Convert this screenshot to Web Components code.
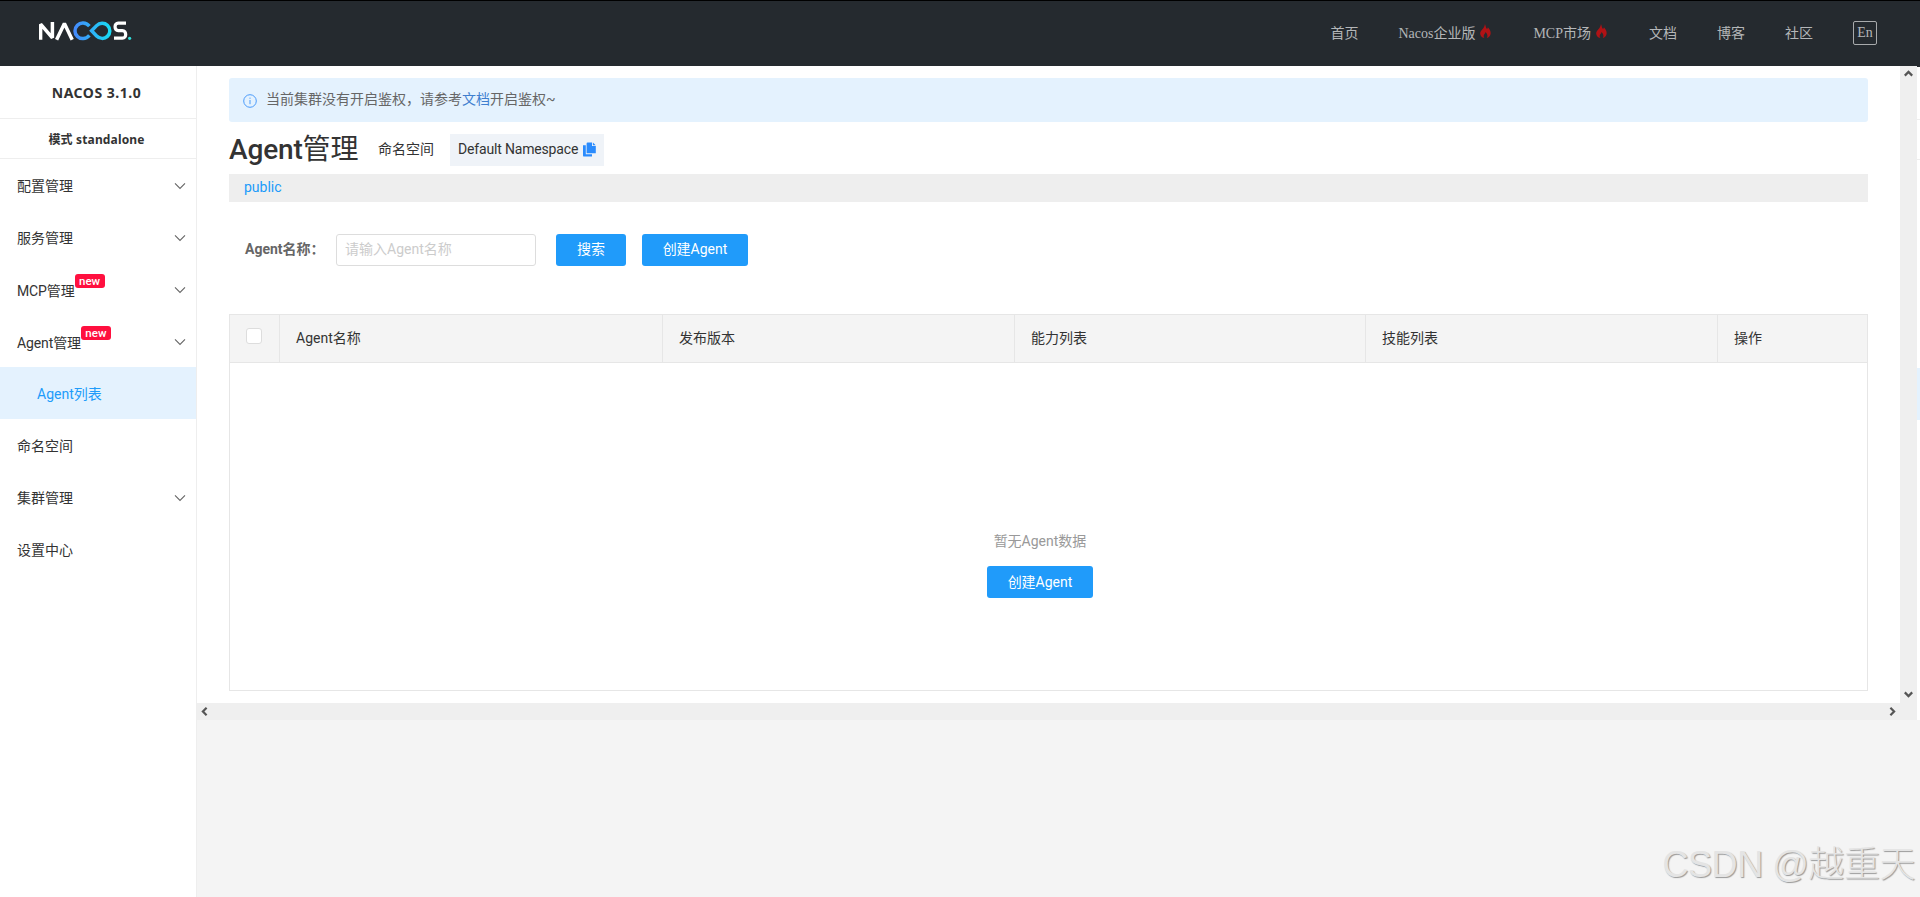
<!DOCTYPE html>
<html lang="zh-CN">
<head>
<meta charset="utf-8">
<title>Nacos</title>
<style>
    body{
        margin: 0;
        background: #f4f4f4;
        color: #333;
        font: 14px/20px Roboto, "Noto Sans CJK SC", sans-serif;
        overflow: hidden;
    }
</style>
</head>
<body>
<nacos-app></nacos-app>
<script>
class NacosLogo extends HTMLElement{
    constructor(){
        super()
        this.attachShadow({mode: 'open'})
        this.shadowRoot.innerHTML = `
            <style>
                :host{
                    display: block;
                    width: 93px;
                    height: 20px;
                }
                svg{
                    display: block;
                }
            </style>
            <svg width="93" height="20" viewBox="0 0 93 20" fill="none" stroke-width="3.5">
                <defs>
                    <linearGradient id="left" x1="34" y1="0" x2="72" y2="0" gradientUnits="userSpaceOnUse">
                        <stop offset="0" stop-color="#4686fb"/>
                        <stop offset="1" stop-color="#17dcf3"/>
                    </linearGradient>
                </defs>
                <path d="M1.6 18.8V3.2L13.4 16.8V1" stroke="#fff" stroke-linejoin="bevel"/>
                <path d="M17.6 18.8L25.4 2.6L33.2 18.8" stroke="#fff" stroke-linejoin="bevel"/>
                <path d="M50.4 5.2C46.8 1 41.4 1.2 38.4 4.2C35.2 7.4 35.2 12.4 38.4 15.4C41.4 18.4 46.8 18.6 50.4 14.4" stroke="url(#left)"/>
                <path d="M52.6 9.8L57.6 4.6C60.6 1.6 65.4 1.4 68.4 4.2C71.6 7.4 71.6 12.4 68.4 15.4C65.4 18.2 60.6 18 57.6 15Z" stroke="url(#left)"/>
                <path d="M87 2.1H79.2C75 2.1 75 9.6 79.2 9.6H83.4C87.8 9.6 87.8 17.2 83.4 17.2H75" stroke="#fff" stroke-width="3.2"/>
                <circle cx="90.6" cy="17.3" r="1.6" fill="#2fe0dd"/>
            </svg>
        `
    }
}

customElements.define('nacos-logo', NacosLogo)

class NavLink extends HTMLElement{
    constructor(){
        super()
        this.attachShadow({mode: 'open'})
        this.shadowRoot.innerHTML = `
            <style>
                :host{
                    display: flex;
                    white-space: nowrap;
                }
                svg{
                    display: none;
                    margin: 0 2px 0 5px;
                }
                :host([hot]) svg{
                    display: block;
                }
            </style>
            <slot></slot>
            <svg width="11" height="14" viewBox="0 0 12 17" preserveAspectRatio="none">
                <path fill="#b01215" d="M5.4 0C6.4 2.4 6 4 7.6 6C8.3 5.4 8.6 4.6 8.6 3.8C10.4 6 12 8.6 11.6 11.8C11.3 14.4 9.6 16.2 7.4 17C8.8 14.6 8.2 12.4 6 9.8C5.8 12 4 12.8 4 14.6C4 15.6 4.3 16.4 4.8 17C2 16.4 .2 14.2 .2 11.4C.2 7.4 5 5.6 5.4 0Z"/>
            </svg>
        `
    }
}

customElements.define('nav-link', NavLink)

class NacosHeader extends HTMLElement{
    constructor(){
        super()
        this.attachShadow({mode: 'open'})
        this.shadowRoot.innerHTML = `
            <style>
                :host{
                    display: flex;
                    justify-content: space-between;
                    box-sizing: border-box;
                    height: 66px;
                    padding: 0 43px 0 39px;
                    border-top: 1px solid #000;
                    background: #252a2f;
                    color: #b4b6b8;
                    font: 14px/20px "Liberation Serif", "Noto Sans CJK SC", serif;
                }
                nacos-logo{
                    margin-top: 20px;
                }
                nav{
                    display: flex;
                    align-items: flex-start;
                    padding-top: 23px;
                    gap: 40px;
                }
                .lang{
                    box-sizing: border-box;
                    width: 24px;
                    height: 24px;
                    border: 1px solid #a8aaac;
                    border-radius: 2px;
                    line-height: 21px;
                    text-align: center;
                    margin-top: -3px;
                }
            </style>
            <nacos-logo></nacos-logo>
            <nav>
                <nav-link>首页</nav-link>
                <nav-link hot>Nacos企业版</nav-link>
                <nav-link hot>MCP市场</nav-link>
                <nav-link>文档</nav-link>
                <nav-link>博客</nav-link>
                <nav-link>社区</nav-link>
                <span class="lang">En</span>
            </nav>
        `
    }
}

customElements.define('nacos-header', NacosHeader)

class MenuItem extends HTMLElement{
    constructor(){
        super()
        this.attachShadow({mode: 'open'})
        this.shadowRoot.innerHTML = `
            <style>
                :host{
                    display: flex;
                    align-items: center;
                    box-sizing: border-box;
                    height: 52px;
                    padding: 2px 10px 0 17px;
                }
                :host([active]){
                    padding-left: 37px;
                    background: #e4f2fe;
                    color: #209bfa;
                }
                :host([fresh]){
                    padding-top: 4px;
                    letter-spacing: -.12px;
                }
                .badge{
                    display: none;
                    align-self: flex-start;
                    box-sizing: border-box;
                    width: 30px;
                    height: 14px;
                    margin-top: 7px;
                    border-radius: 3px;
                    background: #ff103f;
                    color: #fff;
                    font-size: 11.5px;
                    font-weight: 500;
                    letter-spacing: 0;
                    line-height: 14px;
                    text-align: center;
                }
                :host([fresh]) .badge{
                    display: block;
                }
                svg{
                    display: none;
                    margin-left: auto;
                }
                :host([arrow]) svg{
                    display: block;
                }
                :host([fresh]) svg{
                    margin-top: -2px;
                }
            </style>
            <slot></slot>
            <span class="badge"></span>
            <svg width="12" height="8" viewBox="0 0 12 8"><path d="M1 1.4L6 6.4L11 1.4" fill="none" stroke="#666" stroke-width="1.1"/></svg>
        `
    }
    connectedCallback(){
        if(this.hasAttribute('fresh')){
            this.shadowRoot.querySelector('.badge').textContent = 'new'
        }
    }
}

customElements.define('menu-item', MenuItem)

class NacosSidebar extends HTMLElement{
    constructor(){
        super()
        this.attachShadow({mode: 'open'})
        this.shadowRoot.innerHTML = `
            <style>
                :host{
                    display: block;
                    box-sizing: border-box;
                    width: 197px;
                    border-right: 1px solid #eee;
                    background: #fff;
                }
                .title, .mode{
                    padding-right: 3px;
                    border-bottom: 1px solid #eee;
                    text-align: center;
                    font-family: "Noto Sans", "Noto Sans CJK SC", sans-serif;
                    font-weight: bold;
                }
                .title{
                    height: 52px;
                    line-height: 54px;
                    font-size: 14px;
                    letter-spacing: .5px;
                }
                .mode{
                    height: 39px;
                    line-height: 41px;
                    font-size: 12px;
                    letter-spacing: .15px;
                }
            </style>
            <div class="title">NACOS 3.1.0</div>
            <div class="mode">模式 standalone</div>
            <menu-item arrow>配置管理</menu-item>
            <menu-item arrow>服务管理</menu-item>
            <menu-item arrow fresh>MCP管理</menu-item>
            <menu-item arrow fresh>Agent管理</menu-item>
            <menu-item active>Agent列表</menu-item>
            <menu-item>命名空间</menu-item>
            <menu-item arrow>集群管理</menu-item>
            <menu-item>设置中心</menu-item>
        `
    }
}

customElements.define('nacos-sidebar', NacosSidebar)

class NacosButton extends HTMLElement{
    constructor(){
        super()
        this.attachShadow({mode: 'open'})
        this.shadowRoot.innerHTML = `
            <style>
                :host{
                    display: inline-flex;
                    justify-content: center;
                    box-sizing: border-box;
                    height: 32px;
                    width: 106px;
                    border-radius: 3px;
                    background: #209bfa;
                    color: #fff;
                    line-height: 31px;
                }
                :host([small]){
                    width: 70px;
                }
            </style>
            <slot></slot>
        `
    }
}

customElements.define('nacos-button', NacosButton)

class AuthNotice extends HTMLElement{
    constructor(){
        super()
        this.attachShadow({mode: 'open'})
        this.shadowRoot.innerHTML = `
            <style>
                :host{
                    display: flex;
                    box-sizing: border-box;
                    height: 44px;
                    padding: 11px 14px;
                    border-radius: 3px;
                    background: #e4f2fe;
                    color: #666;
                }
                svg{
                    margin: 5px 9px 0 0;
                }
                a{
                    color: #3f7fcf;
                }
            </style>
            <svg width="14" height="14" viewBox="0 0 14 14" fill="none" stroke="#4a9bfa"><circle cx="7" cy="7" r="6.3"/><path d="M7 3.6V4.8M7 6V10.2"/></svg>
            <span>当前集群没有开启鉴权，请参考<a>文档</a>开启鉴权~</span>
        `
    }
}

customElements.define('auth-notice', AuthNotice)

class PageTitle extends HTMLElement{
    constructor(){
        super()
        this.attachShadow({mode: 'open'})
        this.shadowRoot.innerHTML = `
            <style>
                :host{
                    display: flex;
                    align-items: center;
                    height: 32px;
                    margin-top: 12px;
                    white-space: nowrap;
                }
                h1{
                    width: 149px;
                    margin: 0;
                    font-size: 28px;
                    line-height: 32px;
                    font-weight: 500;
                    letter-spacing: -.15px;
                }
                h1 span{
                    font-weight: 400;
                }
                .label{
                    width: 72px;
                    padding-bottom: 2px;
                }
                .space{
                    display: flex;
                    align-items: center;
                    box-sizing: border-box;
                    width: 154px;
                    height: 32px;
                    padding: 0 0 2px 8px;
                    background: #eff3f8;
                    letter-spacing: -.17px;
                }
                svg{
                    margin: 1px 0 0 5px;
                }
            </style>
            <h1>Agent<span>管理</span></h1>
            <span class="label">命名空间</span>
            <div class="space">
                Default Namespace
                <svg width="13" height="15" viewBox="0 0 13 15" fill="#2a8bfd"><path d="M0 3.2H2.8V12.2H9V14.6H1.2Q0 14.6 0 13.4Z"/><path d="M4.6 .4H9V4H12.8V11.2H3.6V1.4Q3.6 .4 4.6 .4Z"/><path d="M9.9 .4L12.7 3.2H9.9Z"/></svg>
            </div>
        `
    }
}

customElements.define('page-title', PageTitle)

class SearchForm extends HTMLElement{
    constructor(){
        super()
        this.attachShadow({mode: 'open'})
        this.shadowRoot.innerHTML = `
            <style>
                :host{
                    display: flex;
                    align-items: center;
                    height: 32px;
                    margin: 32px 0 48px;
                    padding-left: 16px;
                }
                label{
                    width: 91px;
                    padding-bottom: 2px;
                    color: #666;
                    font-weight: 700;
                }
                input{
                    box-sizing: border-box;
                    width: 200px;
                    height: 32px;
                    margin: 0 20px 0 0;
                    padding: 0 8px 2px;
                    border: 1px solid #ddd;
                    border-radius: 3px;
                    font: inherit;
                }
                input::placeholder{
                    color: #ccc;
                }
                nacos-button + nacos-button{
                    margin-left: 16px;
                }
            </style>
            <label>Agent名称：</label>
            <input placeholder="请输入Agent名称">
            <nacos-button small>搜索</nacos-button>
            <nacos-button>创建Agent</nacos-button>
        `
    }
}

customElements.define('search-form', SearchForm)

class AgentTable extends HTMLElement{
    constructor(){
        super()
        this.attachShadow({mode: 'open'})
        this.shadowRoot.innerHTML = `
            <style>
                :host{
                    display: block;
                    box-sizing: border-box;
                    height: 377px;
                    border: 1px solid #e6e6e6;
                }
                .head{
                    display: grid;
                    grid-template-columns: 50px 383px 352px 351px 352px 1fr;
                    height: 47px;
                    border-bottom: 1px solid #e6e6e6;
                    background: #f4f4f4;
                    line-height: 47px;
                }
                .head > *{
                    box-sizing: border-box;
                    padding-left: 16px;
                    border-right: 1px solid #e6e6e6;
                }
                .head > :last-child{
                    border-right: 0;
                }
                .check{
                    padding-top: 13px;
                }
                .check i{
                    display: block;
                    box-sizing: border-box;
                    width: 16px;
                    height: 16px;
                    border: 1px solid #ddd;
                    border-radius: 3px;
                    background: #fff;
                }
                .empty{
                    display: flex;
                    flex-direction: column;
                    align-items: center;
                    padding: 168px 17px 0 0;
                    gap: 15px;
                    color: #999;
                }
                .empty nacos-button{
                    line-height: 32px;
                }
            </style>
            <div class="head">
                <span class="check"><i></i></span>
                <span>Agent名称</span>
                <span>发布版本</span>
                <span>能力列表</span>
                <span>技能列表</span>
                <span>操作</span>
            </div>
            <div class="empty">
                <span>暂无Agent数据</span>
                <nacos-button>创建Agent</nacos-button>
            </div>
        `
    }
}

customElements.define('agent-table', AgentTable)

class ScrollPane extends HTMLElement{
    constructor(){
        super()
        this.attachShadow({mode: 'open'})
        this.shadowRoot.innerHTML = `
            <style>
                :host{
                    display: grid;
                    grid-template-columns: 1703px 17px;
                    grid-template-rows: 637px 17px;
                    height: 654px;
                    background: #efefef;
                }
                .view{
                    box-sizing: border-box;
                    padding: 12px 32px 0;
                    background: #fff;
                }
                .bar{
                    display: flex;
                    justify-content: space-between;
                    align-items: center;
                    padding: 0 4px;
                }
                .bar.v{
                    flex-direction: column;
                    padding: 4px 0 5px;
                }
                svg{
                    fill: none;
                    stroke: #555;
                    stroke-width: 2.2;
                }
            </style>
            <div class="view"><slot></slot></div>
            <div class="bar v">
                <svg width="9" height="7" viewBox="0 0 9 7"><path d="M.8 5.6L4.5 1.9L8.2 5.6"/></svg>
                <svg width="9" height="7" viewBox="0 0 9 7"><path d="M.8 1.4L4.5 5.1L8.2 1.4"/></svg>
            </div>
            <div class="bar">
                <svg width="7" height="9" viewBox="0 0 7 9"><path d="M5.6 .8L1.9 4.5L5.6 8.2"/></svg>
                <svg width="7" height="9" viewBox="0 0 7 9"><path d="M1.4 .8L5.1 4.5L1.4 8.2"/></svg>
            </div>
        `
    }
}

customElements.define('scroll-pane', ScrollPane)

class EdgeStrip extends HTMLElement{
    constructor(){
        super()
        this.attachShadow({mode: 'open'})
        this.shadowRoot.innerHTML = `
            <style>
                :host{
                    display: block;
                    box-sizing: border-box;
                    width: 3px;
                    height: 654px;
                    border-top: 1px solid #252a2f;
                    background: #fff;
                }
                div{
                    border-bottom: 1px solid #eee;
                }
                .a{
                    height: 52px;
                }
                .b{
                    height: 39px;
                }
                .c{
                    height: 52px;
                    margin-top: 208px;
                    border: 0;
                    background: #e4f2fe;
                }
            </style>
            <div class="a"></div>
            <div class="b"></div>
            <div class="c"></div>
        `
    }
}

customElements.define('edge-strip', EdgeStrip)

class NacosApp extends HTMLElement{
    constructor(){
        super()
        this.attachShadow({mode: 'open'})
        this.shadowRoot.innerHTML = `
            <style>
                :host{
                    display: block;
                    position: relative;
                    height: 897px;
                }
                .body{
                    display: flex;
                    height: 831px;
                }
                scroll-pane{
                    flex: 1;
                }
                .crumb{
                    height: 28px;
                    margin-top: 8px;
                    padding-left: 15px;
                    background: #eee;
                    color: #209bfa;
                    line-height: 27px;
                }
                .mark{
                    position: absolute;
                    right: 5px;
                    bottom: 8px;
                    color: #e4e4e4;
                    font: 300 36px/48px "Liberation Sans", "Noto Sans CJK SC", sans-serif;
                    letter-spacing: -.45px;
                    text-shadow: 1px 1px 1px #999;
                    white-space: nowrap;
                }
            </style>
            <nacos-header></nacos-header>
            <div class="body">
                <nacos-sidebar></nacos-sidebar>
                <scroll-pane>
                    <auth-notice></auth-notice>
                    <page-title></page-title>
                    <div class="crumb">public</div>
                    <search-form></search-form>
                    <agent-table></agent-table>
                </scroll-pane>
                <edge-strip></edge-strip>
            </div>
            <div class="mark">CSDN @越重天</div>
        `
    }
}

customElements.define('nacos-app', NacosApp)
</script>
</body>
</html>
